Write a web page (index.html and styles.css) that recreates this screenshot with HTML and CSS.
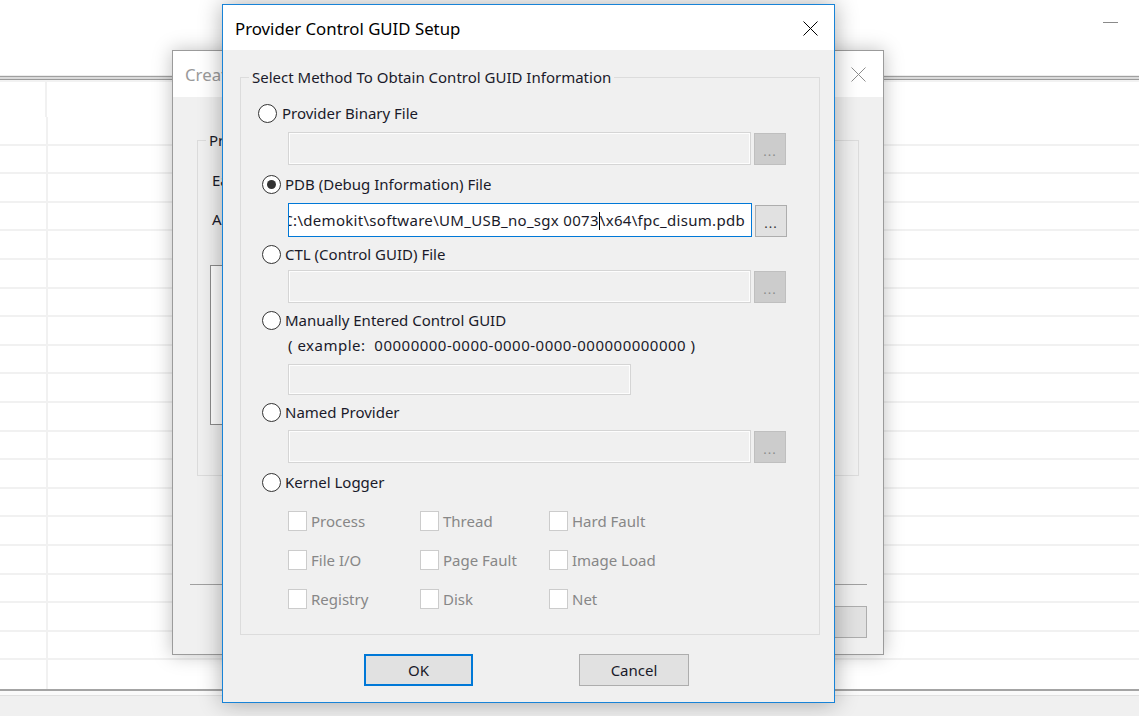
FILE: index.html
```html
<!DOCTYPE html>
<html>
<head>
<meta charset="utf-8">
<title>Provider Control GUID Setup</title>
<link rel="stylesheet" href="styles.css">
</head>
<body>
<div class="app">
  <div class="app-top"><span class="min-glyph"></span></div>
  <div class="app-sep"></div>
  <div class="grid">
    <div class="grid-row grid-head"><div class="cell"></div><div class="cell"></div></div>
    <div class="grid-row"><div class="cell"></div><div class="cell"></div></div>
    <div class="grid-row"><div class="cell"></div><div class="cell"></div></div>
    <div class="grid-row"><div class="cell"></div><div class="cell"></div></div>
    <div class="grid-row"><div class="cell"></div><div class="cell"></div></div>
    <div class="grid-row"><div class="cell"></div><div class="cell"></div></div>
    <div class="grid-row"><div class="cell"></div><div class="cell"></div></div>
    <div class="grid-row"><div class="cell"></div><div class="cell"></div></div>
    <div class="grid-row"><div class="cell"></div><div class="cell"></div></div>
    <div class="grid-row"><div class="cell"></div><div class="cell"></div></div>
    <div class="grid-row"><div class="cell"></div><div class="cell"></div></div>
    <div class="grid-row"><div class="cell"></div><div class="cell"></div></div>
    <div class="grid-row"><div class="cell"></div><div class="cell"></div></div>
    <div class="grid-row"><div class="cell"></div><div class="cell"></div></div>
    <div class="grid-row"><div class="cell"></div><div class="cell"></div></div>
    <div class="grid-row"><div class="cell"></div><div class="cell"></div></div>
    <div class="grid-row"><div class="cell"></div><div class="cell"></div></div>
    <div class="grid-row"><div class="cell"></div><div class="cell"></div></div>
    <div class="grid-row"><div class="cell"></div><div class="cell"></div></div>
    <div class="grid-row"><div class="cell"></div><div class="cell"></div></div>
    <div class="grid-row grid-last"><div class="cell"></div><div class="cell"></div></div>
  </div>
  <div class="app-bottom"><div class="app-bottom-gap"></div><div class="app-status"></div></div>
</div>

<div class="win back">
  <div class="titlebar back-title">
    <span class="title-text">Create</span>
    <svg class="close" width="15" height="15" viewBox="0 0 15 15"><path d="M0.5 0.5L14.5 14.5M14.5 0.5L0.5 14.5" stroke="#8c8c8c" stroke-width="1" fill="none"/></svg>
  </div>
  <div class="back-body">
    <div class="group back-group">
      <span class="legend">Providers</span>
      <div class="back-line first">Each</div>
      <div class="back-line">All</div>
      <div class="listbox"></div>
    </div>
    <div class="back-sep"></div>
    <div class="back-actions"><div class="btn back-btn"></div></div>
  </div>
</div>

<div class="win front">
  <div class="titlebar front-title">
    <span class="title-text">Provider Control GUID Setup</span>
    <svg class="close" width="15" height="15" viewBox="0 0 15 15"><path d="M0.5 0.5L14.5 14.5M14.5 0.5L0.5 14.5" stroke="#000" stroke-width="1" fill="none"/></svg>
  </div>
  <div class="dlg-body">
    <div class="group main-group">
      <span class="legend">Select Method To Obtain Control GUID Information</span>

      <div class="opt opt-first"><span class="radio"></span><span>Provider Binary File</span></div>
      <div class="field f1"><div class="input disabled"></div><div class="browse disabled">...</div></div>

      <div class="opt o2"><span class="radio checked"></span><span>PDB (Debug Information) File</span></div>
      <div class="field f2"><div class="input active"><span class="val">C:\demokit\software\UM_USB_no_sgx 0073<span class="caret"></span>\x64\fpc_disum.pdb</span></div><div class="browse">...</div></div>

      <div class="opt o3"><span class="radio"></span><span>CTL (Control GUID) File</span></div>
      <div class="field f3"><div class="input disabled"></div><div class="browse disabled">...</div></div>

      <div class="opt o4"><span class="radio"></span><span>Manually Entered Control GUID</span></div>
      <div class="example">( example:&nbsp; 00000000-0000-0000-0000-000000000000 )</div>
      <div class="field f4"><div class="input disabled guid"></div></div>

      <div class="opt o5"><span class="radio"></span><span>Named Provider</span></div>
      <div class="field f5"><div class="input disabled"></div><div class="browse disabled">...</div></div>

      <div class="opt o6"><span class="radio"></span><span>Kernel Logger</span></div>
      <div class="checks">
        <div class="chk"><span class="box"></span><span>Process</span></div>
        <div class="chk"><span class="box"></span><span>Thread</span></div>
        <div class="chk"><span class="box"></span><span>Hard Fault</span></div>
        <div class="chk"><span class="box"></span><span>File I/O</span></div>
        <div class="chk"><span class="box"></span><span>Page Fault</span></div>
        <div class="chk"><span class="box"></span><span>Image Load</span></div>
        <div class="chk"><span class="box"></span><span>Registry</span></div>
        <div class="chk"><span class="box"></span><span>Disk</span></div>
        <div class="chk"><span class="box"></span><span>Net</span></div>
      </div>
    </div>
    <div class="actions">
      <div class="btn ok">OK</div>
      <div class="btn cancel">Cancel</div>
    </div>
  </div>
</div>
</body>
</html>
```

FILE: styles.css
```css
* { box-sizing: border-box; }
html, body { margin: 0; padding: 0; }
body {
  width: 1139px;
  height: 716px;
  overflow: hidden;
  position: relative;
  background: #ffffff;
  font-family: "Noto Sans", "Liberation Sans", sans-serif;
  font-size: 15px;
  color: #000;
}

/* background application */
.app { display: flex; flex-direction: column; height: 716px; }
.app-top {
  height: 75px;
  display: flex;
  justify-content: flex-end;
  align-items: flex-start;
  padding: 22px 21px 0 0;
}
.min-glyph { width: 15px; height: 1px; background: #8a8a8a; }
.app-sep {
  height: 7px;
  background: linear-gradient(#ededed 0 1px, #a0a0a0 1px 2px, #dadada 2px 4px, #9a9a9a 4px 5px, #f2f2f2 5px 7px);
}
.grid { display: flex; flex-direction: column; }
.grid-row {
  display: grid;
  grid-template-columns: 48px 1fr;
  height: 28.6px;
  border-bottom: 2px solid #f1f1f1;
}
.grid-row .cell:first-child { border-right: 2px solid #f1f1f1; }
.grid-head { height: 35px; border-bottom: 0; grid-template-columns: 47px 1fr; }
.grid-last { border-bottom: 0; }
.app-bottom { flex: 1; display: flex; flex-direction: column; border-top: 2px solid #a4a4a4; }
.app-bottom-gap { height: 5px; background: #fafafa; border-bottom: 1px solid #e0e0e0; }
.app-status { flex: 1; background: #f0f0f0; }

/* windows */
.win { position: absolute; display: flex; flex-direction: column; }
.back {
  left: 172px; top: 50px; width: 712px; height: 605px;
  border: 1px solid #9b9b9b;
  background: #f0f0f0;
  box-shadow: 0 0 18px rgba(0, 0, 0, 0.25);
}
.front {
  left: 222px; top: 4px; width: 613px; height: 699px;
  border: 1px solid #1883d7;
  background: #f0f0f0;
  box-shadow: 0 0 22px rgba(0, 0, 0, 0.32);
}
.titlebar {
  flex: none;
  background: #fff;
  display: flex;
  align-items: center;
  justify-content: space-between;
}
.title-text { font-size: 16.8px; }
.front-title { height: 45px; padding: 1px 16px 0 12px; }
.back-title { height: 46px; padding: 1px 17px 0 12px; }
.back-title .title-text { color: #9a9a9a; }
.close { display: block; }

/* group box */
.group { position: relative; border: 1px solid #dcdcdc; }
.legend {
  position: absolute;
  left: 8px;
  top: -11px;
  line-height: 20px;
  padding: 0 3px;
  background: #f0f0f0;
  color: #1a1a2a;
  white-space: nowrap;
}

/* back window body */
.back-body { flex: 1; display: flex; flex-direction: column; }
.back-group { margin: 43px 0 0 24px; width: 662px; height: 336px; }
.back-line { line-height: 20px; margin-left: 14px; color: #1a1a2a; white-space: nowrap; }
.back-line.first { margin-top: 29px; }
.back-line + .back-line { margin-top: 19px; }
.listbox { margin: 36px 0 0 12px; height: 160px; width: 600px; background: #fff; border: 1px solid #8c8c8c; }
.back-sep { margin: 108px 16px 0 17px; height: 1px; background: #a0a0a0; }
.back-actions { display: flex; justify-content: flex-end; margin: 21px 16px 0 0; }
.back-btn { width: 88px; height: 32px; background: #e1e1e1; border: 1px solid #adadad; }

/* front dialog body */
.dlg-body { flex: 1; display: flex; flex-direction: column; }
.main-group { margin: 27px 14px 0 17px; height: 558px; display: flex; flex-direction: column; }

.opt { height: 24px; display: flex; align-items: center; gap: 4px; margin-left: 21px; color: #1a1a2a; }
.opt-first { margin-top: 23px; margin-left: 17px; gap: 5px; }
.o2 { margin-top: 7px; }
.o3 { margin-top: 5px; }
.o4 { margin-top: 5px; }
.o5 { margin-top: 5px; }
.o6 { margin-top: 7px; }

.radio {
  width: 19px; height: 19px;
  border: 1px solid #333;
  border-radius: 50%;
  background: #fff;
  position: relative;
  flex: none;
}
.radio.checked::after {
  content: "";
  position: absolute;
  left: 4px; top: 4px;
  width: 9px; height: 9px;
  border-radius: 50%;
  background: #333;
}

.field { display: flex; align-items: flex-end; gap: 3px; margin-left: 47px; }
.f1 { margin-top: 7px; height: 33px; }
.f2 { margin-top: 7px; height: 34px; }
.f3 { margin-top: 4px; height: 33px; }
.f4 { margin-top: 9px; height: 31px; }
.f5 { margin-top: 6px; height: 33px; }

.input { width: 463px; height: 100%; }
.input.disabled {
  background: #f0f0f0;
  border: 1px solid #d5d5d5;
  box-shadow: inset 0 0 0 1px #fdfdfd;
}
.input.guid { width: 343px; }
.input.active {
  width: 464px;
  background: #fff;
  border: 1px solid #0078d7;
  display: flex;
  align-items: center;
  justify-content: flex-end;
  overflow: hidden;
  padding-right: 6px;
}
.val { white-space: nowrap; color: #1a1a2a; flex: none; letter-spacing: 0.3px; }
.caret { display: inline-block; width: 1px; height: 18px; background: #000; vertical-align: -4px; }

.browse {
  width: 32px; height: 32px;
  background: #e1e1e1;
  border: 1px solid #adadad;
  font-size: 13px;
  color: #333;
  display: flex;
  align-items: flex-end;
  justify-content: center;
  padding-bottom: 6px;
  letter-spacing: 1px;
  line-height: 1;
}
.browse.disabled { background: #cccccc; border-color: #bfbfbf; color: #8c8c8c; }

.example { margin: 3px 0 0 47px; line-height: 20px; color: #1a1a2a; letter-spacing: 0.5px; white-space: nowrap; }

.checks {
  margin: 17px 0 0 47px;
  display: grid;
  grid-template-columns: 132px 129px 1fr;
  grid-template-rows: 20px 20px 20px;
  row-gap: 19px;
}
.chk { display: flex; align-items: center; gap: 4px; color: #878787; }
.box { width: 19px; height: 20px; background: #fff; border: 1px solid #cccccc; flex: none; }

.actions { display: flex; margin: 19px 0 0 141px; gap: 106px; }
.btn {
  height: 32px;
  display: flex;
  align-items: center;
  justify-content: center;
  color: #1a1a2a;
}
.ok { width: 109px; background: #e1e1e1; border: 2px solid #0078d7; }
.cancel { width: 110px; background: #e1e1e1; border: 1px solid #adadad; }
```
